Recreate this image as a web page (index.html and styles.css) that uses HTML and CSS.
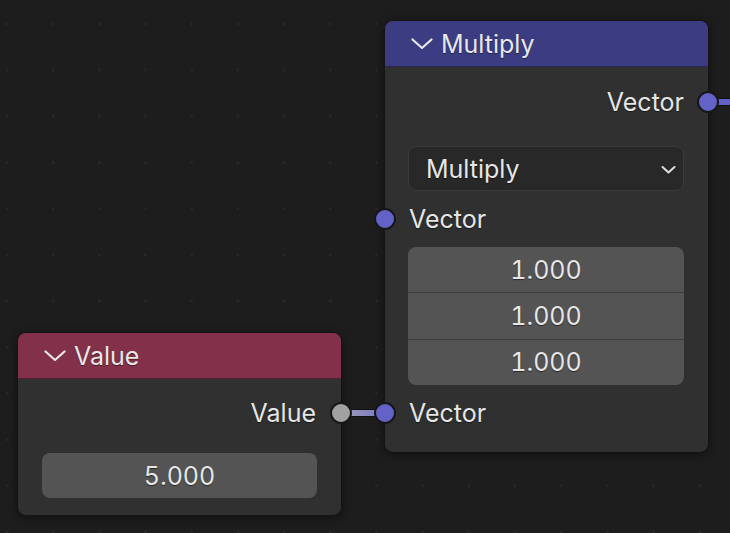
FILE: index.html
```html
<!DOCTYPE html>
<html>
<head>
<meta charset="utf-8">
<link rel="stylesheet" href="styles.css">
</head>
<body>
<div class="canvas">
  <div class="wire wire-out"></div>
  <div class="wire wire-link"></div>

  <div class="node node-multiply">
    <div class="node-header header-vector">
      <svg class="chev" width="22" height="12" viewBox="0 0 22 12"><path d="M1.5 1.5 L11 10 L20.5 1.5" fill="none" stroke="#e8e8e8" stroke-width="2.2" stroke-linecap="round" stroke-linejoin="round"/></svg>
      <span class="title">Multiply</span>
    </div>
    <div class="node-body">
      <div class="row row-out first-out">
        <span class="label">Vector</span>
        <span class="socket socket-vector socket-right"></span>
      </div>
      <div class="dropdown">
        <span>Multiply</span>
        <svg class="dd-chev" width="15" height="10" viewBox="0 0 15 10"><path d="M1.5 2 L7.5 7.5 L13.5 2" fill="none" stroke="#e0e0e0" stroke-width="2" stroke-linecap="round" stroke-linejoin="round"/></svg>
      </div>
      <div class="row row-in">
        <span class="socket socket-vector socket-left"></span>
        <span class="label">Vector</span>
      </div>
      <div class="vec-fields">
        <div class="vec-field">1.000</div>
        <div class="vec-field">1.000</div>
        <div class="vec-field">1.000</div>
      </div>
      <div class="row row-in">
        <span class="socket socket-vector socket-left"></span>
        <span class="label">Vector</span>
      </div>
    </div>
  </div>

  <div class="node node-value">
    <div class="node-header header-input">
      <svg class="chev" width="22" height="12" viewBox="0 0 22 12"><path d="M1.5 1.5 L11 10 L20.5 1.5" fill="none" stroke="#e8e8e8" stroke-width="2.2" stroke-linecap="round" stroke-linejoin="round"/></svg>
      <span class="title">Value</span>
    </div>
    <div class="node-body">
      <div class="row row-out value-out">
        <span class="label">Value</span>
        <span class="socket socket-float socket-right"></span>
      </div>
      <div class="num-field">5.000</div>
    </div>
  </div>
</div>
</body>
</html>
```
FILE: styles.css
```css
html, body {
  margin: 0;
  padding: 0;
  background: #1d1d1d;
}
.canvas {
  position: relative;
  width: 730px;
  height: 533px;
  overflow: hidden;
  background-color: #1d1d1d;
  background-image: radial-gradient(circle, #292929 0, #292929 1px, transparent 1.6px);
  background-size: 46.2px 46.2px;
  background-position: -16.1px 0.9px;
  font-family: "Inter", "DejaVu Sans", sans-serif;
  font-size: 25px;
  color: #e6e6e6;
}
.node {
  position: absolute;
  box-sizing: border-box;
  width: 325px;
  background: #303030;
  border: 1px solid #141414;
  border-radius: 9px;
  box-shadow: 0 2px 8px rgba(0,0,0,0.45);
  display: flex;
  flex-direction: column;
}
.node-multiply { left: 384px; top: 20px; height: 433px; }
.node-value { left: 17px; top: 332px; height: 184px; }

.node-header {
  height: 45px;
  border-radius: 8px 8px 0 0;
  border-bottom: 1px solid rgba(0,0,0,0.35);
  display: flex;
  align-items: center;
  padding-left: 26px;
  flex-shrink: 0;
}
.header-vector { background: #3c3c82; }
.header-input { background: #83314a; }
.chev { margin-right: 8px; margin-top: 1px; }
.title {
  color: #e8e8e8;
  text-shadow: 0 1px 1px rgba(0,0,0,0.45);
}
.node-body {
  position: relative;
  flex: 1;
  display: flex;
  flex-direction: column;
  padding: 0 24px 0 23px;
}
.row {
  position: relative;
  height: 46px;
  display: flex;
  align-items: center;
  text-shadow: 0 1px 1px rgba(0,0,0,0.5);
}
.row-out { justify-content: flex-end; }
.row-in { justify-content: flex-start; margin-top: 5px; }
.first-out { margin-top: 12px; }
.value-out { margin-top: 11px; padding-right: 1px; }
.label { line-height: 1; padding-left: 1px; }

.socket {
  position: absolute;
  top: 50%;
  width: 18px;
  height: 18px;
  margin-top: -11px;
  border: 2px solid #171717;
  border-radius: 50%;
}
.socket-vector { background: #6363c7; }
.socket-float { background: #a1a1a1; }
.socket-right { right: -34.5px; }
.socket-left { left: -34px; }

.dropdown {
  margin-top: 21px;
  height: 45px;
  box-sizing: border-box;
  background: #282828;
  border: 1px solid #3a3a3a;
  border-radius: 8px;
  display: flex;
  align-items: center;
  justify-content: space-between;
  padding: 0 7px 0 17px;
  text-shadow: 0 1px 1px rgba(0,0,0,0.5);
}
.dd-chev { margin-top: 2px; }

.vec-fields {
  margin-top: 5px;
  height: 138px;
  border-radius: 8px;
  background: #545454;
  display: flex;
  flex-direction: column;
  overflow: hidden;
}
.vec-field {
  flex: 1;
  display: flex;
  align-items: center;
  justify-content: center;
  font-variant-numeric: tabular-nums;
  text-shadow: 0 1px 1px rgba(0,0,0,0.5);
}
.vec-field + .vec-field { border-top: 1px solid #3c3c3c; }

.num-field {
  margin-top: 17px;
  margin-left: 1px;
  height: 45px;
  border-radius: 8px;
  background: #545454;
  display: flex;
  align-items: center;
  justify-content: center;
  font-variant-numeric: tabular-nums;
  text-shadow: 0 1px 1px rgba(0,0,0,0.5);
}

.wire {
  position: absolute;
  height: 6px;
  box-shadow: 0 0 0 1px rgba(0,0,0,0.35);
}
.wire-out {
  left: 712px;
  top: 99px;
  width: 30px;
  background: #6363c7;
}
.wire-link {
  left: 345px;
  top: 410px;
  width: 36px;
  background: linear-gradient(90deg, #9a9ab8, #7b7bc4);
}
```
